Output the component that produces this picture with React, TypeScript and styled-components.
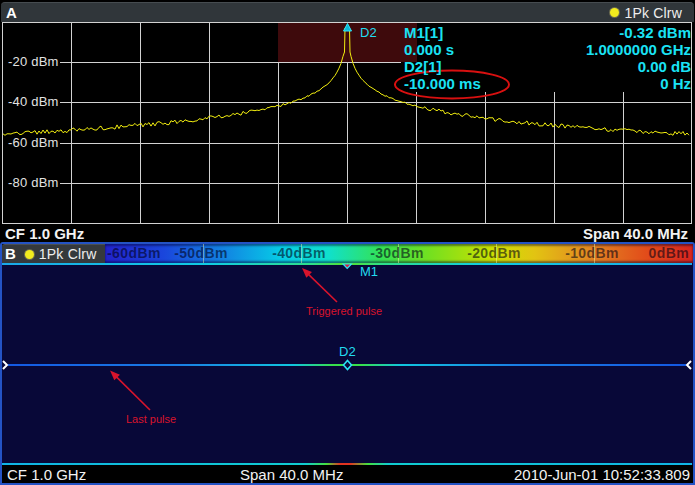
import React from "react";
import styled, { createGlobalStyle } from "styled-components";

const Global = createGlobalStyle`
  html, body { margin: 0; padding: 0; background: #000; }
  body { font-family: "Liberation Sans", Arial, sans-serif; }
  #root { width: 695px; height: 485px; }
`;

const Screen = styled.div`
  width: 695px;
  height: 485px;
  background: #000;
  display: flex;
  flex-direction: column;
  overflow: hidden;
`;

const PanelA = styled.section`
  display: flex;
  flex-direction: column;
  height: 242px;
`;

const TitleBar = styled.header`
  margin: 2px 1px 0 1px;
  height: 20px;
  box-sizing: border-box;
  background: #30363a;
  border-top: 1px solid #464c50;
  border-radius: 4px 4px 0 0;
  display: flex;
  align-items: center;
  padding: 0 12px 0 5px;
`;

const PanelTag = styled.span`
  color: #fff;
  font-weight: bold;
  font-size: 15px;
  line-height: 18px;
`;

const TraceTag = styled.span<{ $push?: boolean }>`
  display: flex;
  align-items: center;
  gap: 5px;
  margin-left: ${(p) => (p.$push ? "auto" : "0")};
  color: #eeeeee;
  font-size: 14px;
  letter-spacing: 0.2px;
  line-height: 18px;
`;

const Dot = styled.span`
  width: 9px;
  height: 9px;
  border-radius: 50%;
  background: #f2ec1e;
  box-shadow: 0 0 0 1px #6a6a50;
`;

const Plot = styled.div`
  position: relative;
  height: 202px;
  margin: 0 3px 0 2px;
  svg { display: block; }
`;

const AxisLabel = styled.span<{ $y: number }>`
  position: absolute;
  left: 6px;
  top: ${(p) => p.$y - 22 - 8}px;
  line-height: 16px;
  font-size: 13px;
  letter-spacing: 0.2px;
  color: #e2e2e2;
  white-space: nowrap;
`;

const MarkerTag = styled.span<{ $x: number; $y: number; $base: number }>`
  position: absolute;
  left: ${(p) => p.$x - 2}px;
  top: ${(p) => p.$y - p.$base - 8}px;
  line-height: 16px;
  font-size: 13px;
  color: #22dcf0;
`;

const MarkerTable = styled.div`
  position: absolute;
  left: 402px;
  right: 1px;
  top: 2px;
  display: grid;
  grid-template-columns: 1fr auto;
  font-size: 15px;
  font-weight: bold;
  line-height: 17px;
  color: #1ae2f4;
  white-space: nowrap;
`;

const Cell = styled.span<{ $right?: boolean }>`
  text-align: ${(p) => (p.$right ? "right" : "left")};
`;

const FooterA = styled.footer`
  height: 18px;
  display: flex;
  align-items: center;
  justify-content: space-between;
  padding: 0 7px 0 5px;
  color: #f2f2f2;
  font-size: 15px;
  font-weight: bold;
`;

const PanelB = styled.section`
  flex: 1;
  display: flex;
  flex-direction: column;
  border: 2px solid #2453c4;
  border-radius: 3px 3px 0 0;
  min-height: 0;
`;

const HeaderB = styled.header`
  height: 19px;
  display: flex;
`;

const TagArea = styled.div`
  width: 103px;
  box-sizing: border-box;
  background: #35393c;
  border-top: 1px solid #4a4f52;
  border-radius: 3px 0 0 0;
  display: flex;
  align-items: center;
  gap: 9px;
  padding-left: 3px;
`;

const ColorBar = styled.div`
  flex: 1;
  position: relative;
  background: linear-gradient(
    to right,
    #2222cc 0%,
    #1a46dc 10%,
    #1282e2 20%,
    #06cce6 30%,
    #10e0cc 38%,
    #34e254 47%,
    #72e020 55%,
    #cce000 66%,
    #e2c412 73%,
    #e28422 83%,
    #e24c1a 92%,
    #d82420 100%
  );
  box-shadow: inset 0 2px 2px rgba(0, 0, 40, 0.45), inset 0 -2px 2px rgba(0, 0, 40, 0.45);
  overflow: hidden;
`;

const Tick = styled.span<{ $x: number }>`
  position: absolute;
  top: 0;
  bottom: 0;
  left: ${(p) => p.$x}px;
  width: 1px;
  background: rgba(255, 255, 170, 0.45);
`;

const ScaleLabel = styled.span<{ $c: number; $align: "l" | "c" | "r" }>`
  position: absolute;
  top: 0;
  line-height: 19px;
  left: ${(p) => p.$c}px;
  transform: translateX(${(p) => (p.$align === "c" ? "-50%" : p.$align === "r" ? "-100%" : "0")});
  font-size: 14px;
  font-weight: bold;
  letter-spacing: 0.4px;
  color: rgba(0, 0, 20, 0.58);
  white-space: nowrap;
`;

const Spectro = styled.div`
  position: relative;
  flex: 1;
  background: #080838;
  svg { display: block; }
`;

const Note = styled.span<{ $x: number; $y: number }>`
  position: absolute;
  left: ${(p) => p.$x - 2}px;
  top: ${(p) => p.$y - 263 - 7}px;
  line-height: 14px;
  font-size: 11px;
  color: #d8142c;
  white-space: nowrap;
`;

const FooterB = styled.footer`
  height: 18px;
  display: flex;
  align-items: center;
  padding: 0 3px 0 5px;
  background: #000;
  color: #f2f2f2;
  font-size: 15px;
`;

const FootItem = styled.span<{ $w?: number; $push?: boolean }>`
  width: ${(p) => (p.$w ? `${p.$w}px` : "auto")};
  margin-left: ${(p) => (p.$push ? "auto" : "0")};
  white-space: nowrap;
`;

/* ---------- data ---------- */
const vx = [2, 71, 140, 209, 278, 347, 416, 485, 554, 623, 691];
const hy = [62, 102, 143, 183];

function rnd(i: number) {
  const s = Math.sin(i * 12.9898 + 78.233) * 43758.5453;
  return s - Math.floor(s);
}
function level(dx: number) {
  return 22 + 2.01 * (5 + 20 * Math.log10(dx));
}
function tracePoints() {
  const pts: string[] = [];
  for (let x = 3; x <= 343; x += 2) {
    const dx = 347 - x;
    const amp = Math.min(2.2, dx / 50);
    const y = level(dx) + (rnd(x) - 0.5) * 2 * amp;
    pts.push(`${x},${y.toFixed(1)}`);
  }
  pts.push("344.5,52", "345,28", "349.5,28", "350,52");
  for (let x = 351; x <= 690; x += 2) {
    const dx = x - 347;
    const amp = Math.min(2.2, dx / 50);
    const y = level(dx) + (rnd(x + 1000) - 0.5) * 2 * amp;
    pts.push(`${x},${y.toFixed(1)}`);
  }
  return pts.join(" ");
}
const TRACE = tracePoints();

const markerRows: [string, string][] = [
  ["M1[1]", "-0.32 dBm"],
  ["0.000 s", "1.0000000 GHz"],
  ["D2[1]", "0.00 dB"],
  ["-10.000 ms", "0 Hz"],
];

const yLabels = [
  { y: 62, t: "-20 dBm" },
  { y: 102, t: "-40 dBm" },
  { y: 143, t: "-60 dBm" },
  { y: 183, t: "-80 dBm" },
];

const scale: { t: string; c: number; a: "l" | "c" | "r" }[] = [
  { t: "-60dBm", c: 2, a: "l" },
  { t: "-50dBm", c: 96, a: "c" },
  { t: "-40dBm", c: 194, a: "c" },
  { t: "-30dBm", c: 292, a: "c" },
  { t: "-20dBm", c: 389, a: "c" },
  { t: "-10dBm", c: 487, a: "c" },
  { t: "0dBm", c: 584, a: "r" },
];
const ticks = [1, 2, 3, 4, 5].map((k) => Math.round(97.8 * k));

function Arrow({ tx, ty, fx, fy }: { tx: number; ty: number; fx: number; fy: number }) {
  const dxv = tx - fx;
  const dyv = ty - fy;
  const len = Math.hypot(dxv, dyv);
  const ux = dxv / len;
  const uy = dyv / len;
  const bx = tx - ux * 10;
  const by = ty - uy * 10;
  const px = -uy * 4;
  const py = ux * 4;
  return (
    <g>
      <line x1={fx} y1={fy} x2={bx + ux * 2} y2={by + uy * 2} stroke="#d8142c" strokeWidth={1.6} />
      <polygon
        points={`${tx},${ty} ${bx + px},${by + py} ${bx - px},${by - py}`}
        fill="#d8142c"
      />
    </g>
  );
}

export default function App() {
  return (
    <Screen>
      <Global />
      <PanelA>
        <TitleBar>
          <PanelTag>A</PanelTag>
          <TraceTag $push>
            <Dot />
            1Pk Clrw
          </TraceTag>
        </TitleBar>
        <Plot>
          <svg width={690} height={202} viewBox="2 22 690 202">
            {vx.map((x) => (
              <line key={x} x1={x + 0.5} y1={22} x2={x + 0.5} y2={224} stroke="#d2d2d2" strokeWidth={1} />
            ))}
            <line x1={2} y1={22.5} x2={692} y2={22.5} stroke="#d2d2d2" />
            <line x1={2} y1={223.5} x2={692} y2={223.5} stroke="#d2d2d2" />
            {hy.map((y) => (
              <line key={y} x1={60} y1={y + 0.5} x2={692} y2={y + 0.5} stroke="#d2d2d2" />
            ))}
            <rect x={401} y={23} width={290} height={69} fill="#000" />
            <rect x={278} y={23} width={139} height={39} fill="#3e0a0c" />
            <polyline points={TRACE} fill="none" stroke="#f2ee10" strokeWidth={1} />
            <polygon points="347.5,23.5 343.5,31 351.5,31" fill="#0ab8d8" stroke="#30e8f8" strokeWidth={1} />
            <ellipse cx={452} cy={84.5} rx={57} ry={14} fill="none" stroke="#d81010" strokeWidth={2} />
          </svg>
          {yLabels.map((l) => (
            <AxisLabel key={l.t} $y={l.y}>
              {l.t}
            </AxisLabel>
          ))}
          <MarkerTag $x={360} $y={33} $base={22}>
            D2
          </MarkerTag>
          <MarkerTable>
            {markerRows.map(([a, b]) => (
              <React.Fragment key={a}>
                <Cell>{a}</Cell>
                <Cell $right>{b}</Cell>
              </React.Fragment>
            ))}
          </MarkerTable>
        </Plot>
        <FooterA>
          <span>CF 1.0 GHz</span>
          <span>Span 40.0 MHz</span>
        </FooterA>
      </PanelA>

      <PanelB>
        <HeaderB>
          <TagArea>
            <PanelTag>B</PanelTag>
            <TraceTag>
              <Dot />
              1Pk Clrw
            </TraceTag>
          </TagArea>
          <ColorBar>
            {ticks.map((t) => (
              <Tick key={t} $x={t} />
            ))}
            {scale.map((s) => (
              <ScaleLabel key={s.t} $c={s.c} $align={s.a}>
                {s.t}
              </ScaleLabel>
            ))}
          </ColorBar>
        </HeaderB>
        <Spectro>
          <svg width={690} height={202} viewBox="2 263 690 202">
            <defs>
              <linearGradient id="topLine" x1="0" x2="1" y1="0" y2="0">
                <stop offset="0" stopColor="#1aa8e8" />
                <stop offset="0.3" stopColor="#10cce2" />
                <stop offset="0.45" stopColor="#2ee08a" />
                <stop offset="0.5" stopColor="#54e22c" />
                <stop offset="0.55" stopColor="#2ee08a" />
                <stop offset="0.7" stopColor="#10cce2" />
                <stop offset="1" stopColor="#1aa8e8" />
              </linearGradient>
              <linearGradient id="midLine" gradientUnits="userSpaceOnUse" x1="8" x2="686" y1="0" y2="0">
                <stop offset="0" stopColor="#1458e2" />
                <stop offset="0.25" stopColor="#1a7ee6" />
                <stop offset="0.42" stopColor="#10c6e0" />
                <stop offset="0.48" stopColor="#38e04a" />
                <stop offset="0.52" stopColor="#38e04a" />
                <stop offset="0.58" stopColor="#10c6e0" />
                <stop offset="0.75" stopColor="#1a7ee6" />
                <stop offset="1" stopColor="#1458e2" />
              </linearGradient>
              <linearGradient id="botLine" x1="0" x2="1" y1="0" y2="0">
                <stop offset="0" stopColor="#10b4e4" />
                <stop offset="0.44" stopColor="#10ccd0" />
                <stop offset="0.47" stopColor="#44e03c" />
                <stop offset="0.49" stopColor="#e23420" />
                <stop offset="0.505" stopColor="#e23420" />
                <stop offset="0.53" stopColor="#44e03c" />
                <stop offset="0.56" stopColor="#10ccd0" />
                <stop offset="1" stopColor="#10b4e4" />
              </linearGradient>
            </defs>
            <rect x={2} y={263} width={690} height={2} fill="url(#topLine)" />
            <polygon points="343,264 351.5,264 347.2,268.5" fill="#d82040" stroke="#2ae4f4" strokeWidth={1.2} />
            <rect x={8} y={364} width={678} height={2} fill="url(#midLine)" />
            <polygon points="347.5,360.5 351.5,365 347.5,369.5 343.5,365" fill="#0a0a3a" stroke="#2ae4f4" strokeWidth={1.6} />
            <path d="M3,361 L7,365 L3,369" fill="none" stroke="#ffffff" strokeWidth={2} />
            <path d="M691,361 L687,365 L691,369" fill="none" stroke="#ffffff" strokeWidth={2} />
            <rect x={2} y={463} width={690} height={2} fill="url(#botLine)" />
            <Arrow tx={302} ty={268} fx={337} fy={302} />
            <Arrow tx={110} ty={370.5} fx={150} fy={410} />
          </svg>
          <MarkerTag $x={360} $y={272} $base={263}>
            M1
          </MarkerTag>
          <MarkerTag $x={339} $y={352} $base={263}>
            D2
          </MarkerTag>
          <Note $x={306} $y={311}>Triggered pulse</Note>
          <Note $x={126} $y={419}>Last pulse</Note>
        </Spectro>
        <FooterB>
          <FootItem $w={233}>CF 1.0 GHz</FootItem>
          <FootItem>Span 40.0 MHz</FootItem>
          <FootItem $push>2010-Jun-01 10:52:33.809</FootItem>
        </FooterB>
      </PanelB>
    </Screen>
  );
}
